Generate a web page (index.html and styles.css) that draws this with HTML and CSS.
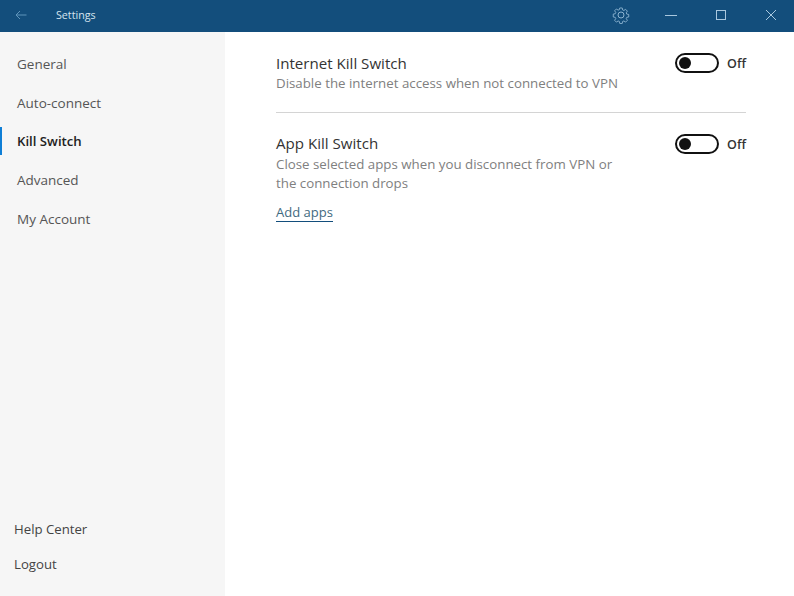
FILE: index.html
```html
<!DOCTYPE html>
<html lang="en">
<head>
<meta charset="utf-8">
<title>Settings</title>
<link rel="stylesheet" href="styles.css">
</head>
<body>
<div class="app">
  <header class="titlebar">
    <svg class="back" width="12" height="10" viewBox="0 0 12 10"><path d="M11.5 5H1M5 1 1 5l4 4" fill="none" stroke="#5f94ba" stroke-width="1"/></svg>
    <span class="title">Settings</span>
    <svg class="gear" width="18" height="18" viewBox="0 0 18 18"><path d="M7.6 1.2h2.8l.4 2.2 1.4.6 1.9-1.3 2 2-1.3 1.9.6 1.4 2.2.4v2.8l-2.2.4-.6 1.4 1.3 1.9-2 2-1.9-1.3-1.4.6-.4 2.2H7.6l-.4-2.2-1.4-.6-1.9 1.3-2-2 1.3-1.9-.6-1.4-2.2-.4V8l2.2-.4.6-1.4-1.3-1.9 2-2 1.9 1.3 1.4-.6z" transform="translate(.9 .9) scale(.9)" fill="none" stroke="#8db4d1" stroke-width="1"/><circle cx="9" cy="9" r="3" fill="none" stroke="#8db4d1"/></svg>
    <div class="winctl">
      <svg width="12" height="12" viewBox="0 0 12 12"><path d="M0 6.5h12" stroke="#a9c8df" stroke-width="1"/></svg>
      <svg width="12" height="12" viewBox="0 0 12 12"><rect x="1.5" y="1.5" width="9" height="9" fill="none" stroke="#a9c8df"/></svg>
      <svg width="12" height="12" viewBox="0 0 12 12"><path d="M1 1l10 10M11 1 1 11" stroke="#a9c8df" stroke-width="1"/></svg>
    </div>
  </header>
  <div class="main">
    <nav class="sidebar">
      <ul class="menu">
        <li class="menu-item">General</li>
        <li class="menu-item">Auto-connect</li>
        <li class="menu-item active">Kill Switch</li>
        <li class="menu-item">Advanced</li>
        <li class="menu-item">My Account</li>
      </ul>
      <ul class="foot">
        <li class="foot-item">Help Center</li>
        <li class="foot-item">Logout</li>
      </ul>
    </nav>
    <section class="content">
      <div class="row first">
        <div class="text">
          <div class="heading">Internet Kill Switch</div>
          <div class="desc">Disable the internet access when not connected to VPN</div>
        </div>
        <div class="switch"><span class="track"><span class="knob"></span></span><span class="state">Off</span></div>
      </div>
      <div class="row second">
        <div class="text">
          <div class="heading">App Kill Switch</div>
          <div class="desc">Close selected apps when you disconnect from VPN or<br>the connection drops</div>
          <a class="link">Add apps</a>
        </div>
        <div class="switch"><span class="track"><span class="knob"></span></span><span class="state">Off</span></div>
      </div>
    </section>
  </div>
</div>
</body>
</html>
```
FILE: styles.css
```css
* { box-sizing: border-box; }
html, body { margin: 0; height: 100%; }
body { font-family: "Open Sans", "Noto Sans", sans-serif; background: #fff; overflow: hidden; }
.app { display: flex; flex-direction: column; height: 596px; }
.titlebar { height: 32px; flex: none; background: #134e7c; display: flex; align-items: center; padding: 0 17px 2px 15px; }
.back { flex: none; }
.title { margin-left: 29px; font-size: 10.7px; color: #d5e4ef; flex: 1; }
.gear { margin-right: 35px; flex: none; }
.winctl { display: flex; gap: 38px; align-items: center; }
.main { flex: 1; display: flex; min-height: 0; }
.sidebar { width: 225px; flex: none; background: #f6f6f6; display: flex; flex-direction: column; justify-content: space-between; padding: 13px 0 14px; }
.menu, .foot { list-style: none; margin: 0; padding: 0; }
.menu-item { height: 38.75px; line-height: 38px; padding-left: 17px; font-size: 13.5px; color: #555; position: relative; }
.menu-item.active { color: #222; font-weight: 600; font-size: 13.2px; line-height: 37px; }
.menu-item.active::before { content: ""; position: absolute; left: 0; top: 4px; width: 2px; height: 28px; background: #0f7fd6; }
.foot-item { height: 35px; line-height: 35px; padding-left: 14px; font-size: 13.2px; color: #444; }
.content { flex: 1; padding: 0 48px 0 51px; }
.row { display: flex; justify-content: space-between; align-items: flex-start; }
.first { padding-top: 20px; height: 81px; border-bottom: 1px solid #d4d4d4; }
.second { padding-top: 19px; }
.heading { font-size: 15.1px; line-height: 23px; color: #333; }
.first .heading { line-height: 22px; }
.first .switch { margin-top: 1px; }
.desc { font-size: 13.3px; line-height: 19px; color: #808080; }
.link { display: inline-block; margin-top: 11px; font-size: 13px; line-height: 17px; color: #3f6a80; border-bottom: 1px solid #134e7c; }
.switch { display: flex; align-items: center; margin-top: 2px; }
.track { width: 44px; height: 20px; border: 2px solid #111; border-radius: 10px; display: flex; align-items: center; padding-left: 2px; }
.knob { width: 12px; height: 12px; border-radius: 50%; background: #111; }
.state { margin-left: 8px; font-size: 12.5px; font-weight: 600; color: #333; }
```
